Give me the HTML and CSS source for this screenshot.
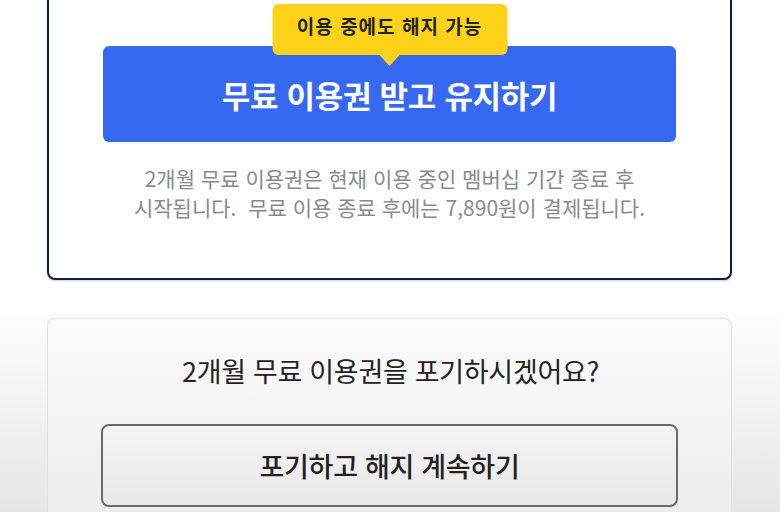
FILE: index.html
```html
<!DOCTYPE html>
<html lang="ko">
<head>
    <meta charset="UTF-8">
    <title>멤버십 해지</title>
    <meta name="viewport" content="width=device-width, initial-scale=1.0">
    <link rel="stylesheet" href="styles.css">
</head>
<body>

<div class="page">
    <section class="offer-card">
        <div class="keep-wrap">
            <span class="bubble">이용 중에도 해지 가능</span>
            <button class="btn-keep" type="button">무료 이용권 받고 유지하기</button>
        </div>
        <p class="offer-note">2개월 무료 이용권은 현재 이용 중인 멤버십 기간 종료 후<br>시작됩니다.&nbsp; 무료 이용 종료 후에는 7,890원이 결제됩니다.</p>
    </section>

    <section class="giveup-card">
        <p class="giveup-title">2개월 무료 이용권을 포기하시겠어요?</p>
        <button class="btn-giveup" type="button">포기하고 해지 계속하기</button>
    </section>
</div>

</body>
</html>
```

FILE: styles.css
```css
* { box-sizing: border-box; }
:root {
    --navy: #161b3d;
    --blue: #3768f2;
    --yellow: #ffd21a;
    --gray-text: #8a8a8a;
}
html, body {
    margin: 0px;
    height: 100%;
    overflow: hidden;
}
body {
    font-family: "Noto Sans CJK KR", "Noto Sans", sans-serif;
    background: linear-gradient(to bottom, #ffffff 300px, #e6e6e6 512px);
}
.page {
    width: 685px;
    margin-left: 47px;
}

/* upper card: keep membership */
.offer-card {
    margin-top: -30px;
    padding: 74px 54px 0px 54px;
    height: 310px;
    background-color: #fff;
    border: 2.5px solid var(--navy);
    border-radius: 8px;
    box-shadow: 0 1px 2px rgba(40, 60, 140, 0.25);
}
.keep-wrap {
    position: relative;
}
.btn-keep {
    display: block;
    width: 100%;
    height: 96px;
    border: none;
    border-radius: 6px;
    background-color: var(--blue);
    color: #fff;
    font-family: inherit;
    font-size: 31px;
    font-weight: 700;
    letter-spacing: -0.3px;
}
.bubble {
    position: absolute;
    top: -42px;
    left: 50%;
    transform: translateX(-50%);
    width: 235px;
    height: 51px;
    padding-top: 8px;
    border-radius: 6px;
    background-color: var(--yellow);
    color: #222;
    font-size: 19px;
    font-weight: 700;
    text-align: center;
    letter-spacing: 1px;
    white-space: nowrap;
    z-index: 1;
}
.bubble::after {
    content: "";
    position: absolute;
    left: 50%;
    bottom: -11px;
    margin-left: -11px;
    border-left: 11px solid transparent;
    border-right: 11px solid transparent;
    border-top: 12px solid var(--yellow);
}
.offer-note {
    margin: 22px 0px 0px 0px;
    color: var(--gray-text);
    font-size: 21px;
    line-height: 29px;
    text-align: center;
    letter-spacing: 0px;
    white-space: nowrap;
}

/* lower card: give up the coupon */
.giveup-card {
    margin-top: 38px;
    padding: 32px 52px 0px 54px;
    height: 230px;
    background: linear-gradient(to bottom, #fcfcfc, #eaeaea);
    border: 1px solid #e2e2e2;
    border-radius: 8px;
}
.giveup-title {
    margin: 0px;
    color: #222;
    font-size: 27px;
    line-height: 40px;
    text-align: center;
    letter-spacing: -0.3px;
}
.btn-giveup {
    display: block;
    width: 577px;
    height: 83px;
    margin-top: 33px;
    margin-left: -1px;
    border: 2px solid #6a6a6a;
    border-radius: 8px;
    background: linear-gradient(to bottom, #f4f4f4, #e9e9e9);
    color: #222;
    font-family: inherit;
    font-size: 27px;
    font-weight: 500;
    letter-spacing: -0.3px;
}
```
